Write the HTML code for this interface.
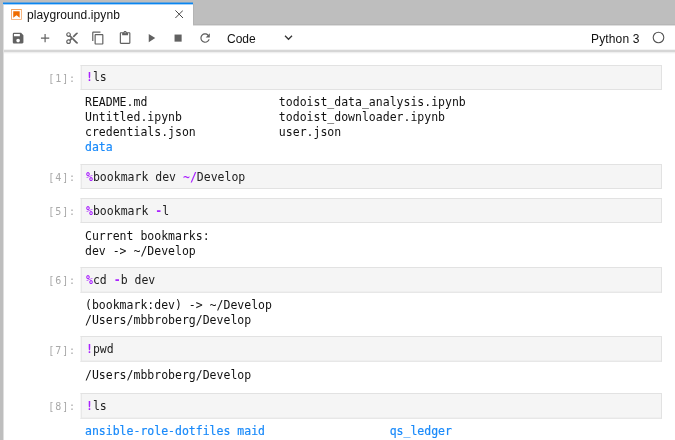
<!DOCTYPE html>
<html lang="en">
<head>
<meta charset="utf-8">
<title>playground.ipynb</title>
<style>
html,body{margin:0;padding:0;}
body{width:675px;height:440px;overflow:hidden;background:#fff;position:relative;
  font-family:"Liberation Sans",sans-serif;color:#212121;}
#left{position:absolute;left:0;top:0;width:3px;height:440px;background:#bebebe;z-index:3;}
#left2{position:absolute;left:3px;top:5px;width:1px;height:435px;background:#dfdfdf;z-index:4;}
#tabbar{position:absolute;left:0;top:0;width:675px;height:25px;background:#bebebe;}
#tabedge{position:absolute;left:193px;top:24px;width:482px;height:2px;background:linear-gradient(#b6b6b6 0,#b6b6b6 1px,#dedede 1px,#dedede 2px);z-index:2;}
#tabedge2{position:absolute;left:193px;top:4px;width:1px;height:21px;background:#b4b4b4;}
#tab{position:absolute;left:3px;top:2px;width:190px;height:23px;background:linear-gradient(#6aa4d8 0,#6aa4d8 1px,#0b86f0 1px,#0b86f0 2px,#a5d1f9 2px,#a5d1f9 3px,#fff 3px);box-sizing:border-box;}
#tab .label{position:absolute;left:23.6px;top:5.6px;letter-spacing:0.1px;font-size:12px;line-height:15px;color:#111;white-space:nowrap;}
#tab svg{position:absolute;}
#toolbar{position:absolute;left:3px;top:25px;width:672px;height:29px;background:linear-gradient(#fff 0,#fff 24px,#f3f3f3 24px,#f3f3f3 25px,#d6d6d6 25px,#d6d6d6 27px,#efefef 27px,#efefef 28px,#fafafa 28px,#fafafa 29px);}
#toolbar svg{position:absolute;}
#toolbar .txt{position:absolute;font-size:12px;line-height:15px;color:#111;white-space:nowrap;}
.prompt,.in,.out{font-family:"DejaVu Sans Mono","Liberation Mono",monospace;font-size:11.5px;line-height:15px;white-space:pre;}
.prompt{position:absolute;left:31.5px;width:44px;text-align:right;color:#a8a8a8;font-size:10px;letter-spacing:0.9px;margin-top:0.5px;}
.box{position:absolute;left:80px;width:582px;height:25px;box-sizing:border-box;background:#f5f5f5;border:1px solid #e2e2e2;border-left-color:#f6f6f6;box-shadow:inset 1px 0 0 #e8e8e8;}
.box.t{height:26px;border-bottom-color:#e7e7e7;box-shadow:inset 1px 0 0 #e8e8e8,inset 0 -1px 0 #efefef;}
.in{position:absolute;left:86px;color:#212121;}
.out{position:absolute;left:85px;color:#111;margin:0;line-height:15.15px;}
.op{color:#aa22ff;font-weight:bold;}
.dir{color:#1a8afa;-webkit-text-stroke:0.2px #1a8afa;}
.in,.out,.prompt,.label,.txt{will-change:transform;}
</style>
</head>
<body>
<div id="tabbar"></div>
<div id="left"></div>
<div id="left2"></div>
<div id="tabedge"></div>
<div id="tabedge2"></div>
<div id="tab">
  <svg style="left:7.200px;top:5.850px" width="12.900" height="12.900" viewBox="0 0 22 22"><g fill="#ef6c00"><path d="M18.7 3.3v15.400H3.300V3.300h15.400m1.500-1.500H1.800v18.300h18.300l.1-18.300z" opacity=".62"/><path d="M16.500 16.500l-5.400-4.300-5.600 4.300v-11h11z"/></g></svg>
  <span class="label">playground.ipynb</span>
  <svg style="left:171.700px;top:7.900px" width="8.400" height="8.400" viewBox="0 0 8.400 8.400"><path d="M0.400 0.400l7.600 7.600M8 0.400l-7.600 7.600" stroke="#424242" stroke-width="1" fill="none"/></svg>
</div>
<div id="toolbar">
  <!-- save -->
  <svg style="left:8.40px;top:5.70px" width="14.2" height="14.2" viewBox="0 0 24 24"><path fill="#616161" d="M17 3H5a2 2 0 0 0-2 2v14a2 2 0 0 0 2 2h14c1.100 0 2-.9 2-2V7l-4-4zm-5 16c-1.660 0-3-1.340-3-3s1.340-3 3-3 3 1.340 3 3-1.340 3-3 3zm3-10H5V5h10v4z"/></svg>
  <!-- add -->
  <svg style="left:35.00px;top:5.70px" width="14.2" height="14.2" viewBox="0 0 24 24"><path fill="#616161" d="M19 13h-6v6h-2v-6H5v-2h6V5h2v6h6v2z"/></svg>
  <!-- cut -->
  <svg style="left:61.60px;top:5.70px" width="14.2" height="14.2" viewBox="0 0 24 24"><path fill="#616161" d="M9.640 7.640c.23-.5.360-1.050.360-1.640 0-2.210-1.790-4-4-4S2 3.790 2 6s1.790 4 4 4c.59 0 1.140-.13 1.640-.36L10 12l-2.360 2.360C7.140 14.130 6.590 14 6 14c-2.210 0-4 1.790-4 4s1.790 4 4 4 4-1.790 4-4c0-.59-.13-1.140-.36-1.640L12 14l7 7h3v-1L9.640 7.640zM6 8c-1.100 0-2-.89-2-2s.9-2 2-2 2 .89 2 2-.9 2-2 2zm0 12c-1.100 0-2-.89-2-2s.9-2 2-2 2 .89 2 2-.9 2-2 2zm6-7.500c-.28 0-.5-.22-.5-.5s.22-.5.5-.5.5.22.5.5-.22.500-.5.500zM19 3l-6 6 2 2 7-7V3z"/></svg>
  <!-- copy -->
  <svg style="left:88.20px;top:5.70px" width="14.2" height="14.2" viewBox="0 0 24 24"><path fill="#616161" d="M16 1H4c-1.100 0-2 .9-2 2v14h2V3h12V1zm3 4H8c-1.100 0-2 .9-2 2v14c0 1.100.9 2 2 2h11c1.100 0 2-.9 2-2V7c0-1.100-.9-2-2-2zm0 16H8V7h11v14z"/></svg>
  <!-- paste -->
  <svg style="left:114.80px;top:5.70px" width="14.2" height="14.2" viewBox="0 0 24 24"><path fill="#616161" d="M19 2h-4.180C14.400.84 13.300 0 12 0c-1.300 0-2.400.84-2.820 2H5c-1.100 0-2 .9-2 2v16c0 1.100.9 2 2 2h14c1.100 0 2-.9 2-2V4c0-1.100-.9-2-2-2zm-7 0c.55 0 1 .45 1 1s-.45 1-1 1-1-.45-1-1 .45-1 1-1zm7 18H5V4h2v3h10V4h2v16z"/></svg>
  <!-- run -->
  <svg style="left:141.40px;top:5.70px" width="14.2" height="14.2" viewBox="0 0 24 24"><path fill="#616161" d="M8 5v14l11-7z"/></svg>
  <!-- stop -->
  <svg style="left:168.00px;top:5.70px" width="14.2" height="14.2" viewBox="0 0 24 24"><path fill="#616161" d="M6 6h12v12H6z"/></svg>
  <!-- refresh -->
  <svg style="left:194.60px;top:5.70px" width="14.2" height="14.2" viewBox="0 0 24 24"><path fill="#616161" d="M17.650 6.350C16.200 4.900 14.210 4 12 4c-4.420 0-7.990 3.580-7.990 8s3.570 8 7.990 8c3.730 0 6.840-2.550 7.730-6h-2.080c-.82 2.330-3.040 4-5.650 4-3.310 0-6-2.690-6-6s2.690-6 6-6c1.660 0 3.140.69 4.220 1.780L13 11h7V4l-2.350 2.350z"/></svg>
  <span class="txt" style="left:224px;top:6.6px">Code</span>
  <svg style="left:281.300px;top:10px" width="9" height="6" viewBox="0 0 9 6"><path d="M1 0.800l3.500 3.500L8 0.800" stroke="#333" stroke-width="1.250" fill="none"/></svg>
  <span class="txt" style="left:587.500px;top:6.6px;letter-spacing:0.15px">Python 3</span>
  <svg style="left:649.2px;top:6.3px" width="13" height="13" viewBox="0 0 13 13"><circle cx="6.500" cy="6.500" r="5.300" fill="none" stroke="#555" stroke-width="1.100"/></svg>
</div>

<!-- cell 1 -->
<div class="prompt" style="top:70px">[1]:</div>
<div class="box" style="top:64.700px"></div>
<div class="in" style="top:70px"><span class="op">!</span>ls</div>
<pre class="out" style="top:95px">README.md                   todoist_data_analysis.ipynb
Untitled.ipynb              todoist_downloader.ipynb
credentials.json            user.json
<span class="dir">data</span></pre>

<!-- cell 4 -->
<div class="prompt" style="top:169.500px">[4]:</div>
<div class="box" style="top:164.200px"></div>
<div class="in" style="top:169.500px"><span class="op">%</span>bookmark dev <span class="op">~/</span>Develop</div>

<!-- cell 5 -->
<div class="prompt" style="top:203.500px">[5]:</div>
<div class="box" style="top:198.200px"></div>
<div class="in" style="top:203.500px"><span class="op">%</span>bookmark <span class="op">-</span>l</div>
<pre class="out" style="top:229px">Current bookmarks:
dev -&gt; ~/Develop</pre>

<!-- cell 6 -->
<div class="prompt" style="top:272.300px">[6]:</div>
<div class="box t" style="top:267px"></div>
<div class="in" style="top:273px"><span class="op">%</span>cd <span class="op">-</span>b dev</div>
<pre class="out" style="top:298px">(bookmark:dev) -&gt; ~/Develop
/Users/mbbroberg/Develop</pre>

<!-- cell 7 -->
<div class="prompt" style="top:342px">[7]:</div>
<div class="box t" style="top:336.2px"></div>
<div class="in" style="top:342px"><span class="op">!</span>pwd</div>
<pre class="out" style="top:367.500px">/Users/mbbroberg/Develop</pre>

<!-- cell 8 -->
<div class="prompt" style="top:398.500px">[8]:</div>
<div class="box t" style="top:393.200px"></div>
<div class="in" style="top:398.500px"><span class="op">!</span>ls</div>
<pre class="out" style="top:423.500px"><span class="dir">ansible-role-dotfiles maid                  qs_ledger</span></pre>
</body>
</html>
